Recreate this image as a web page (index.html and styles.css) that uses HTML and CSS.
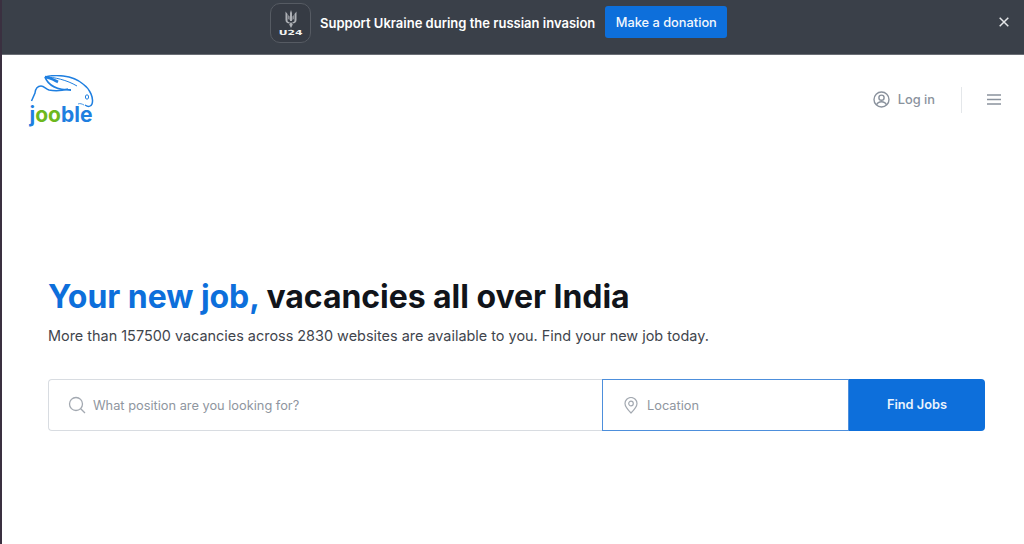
FILE: index.html
```html
<!DOCTYPE html>
<html lang="en">
<head>
<meta charset="utf-8">
<title>Jooble</title>
<link rel="stylesheet" href="styles.css">
</head>
<body>
<div class="banner">
  <div class="u24">
    <svg class="trident" width="12" height="18" viewBox="0 0 12 18" fill="#aeb1b6" stroke="none"><path d="M6 0l1 3v8H5V3zM.5 1.500L2.500 4v6.500c0 1 1 1.500 2 1.500v1.500C2 13.500.5 12 .5 10zM11.500 1.500L9.500 4v6.500c0 1-1 1.500-2 1.500v1.500c2.500 0 4-1.500 4-3.500zM3.300 5l1.200 1.500V10L3.300 9zM8.700 5L7.500 6.500V10l1.200-1zM6 12l1.800 2.500L6 18l-1.800-3.500z"/></svg>
    <span class="u24-text">U24</span>
  </div>
  <span class="banner-text">Support Ukraine during the russian invasion</span>
  <a class="donate">Make a donation</a>
  <svg class="close" width="10" height="10" viewBox="0 0 10 10" fill="none" stroke="#e4e6e8" stroke-width="1.500"><path d="M.7.700l8.600 8.600M9.300.700L.7 9.300"/></svg>
</div>
<header class="topbar">
  <div class="logo">
    <svg class="rabbit" width="66" height="34" viewBox="0 0 66 34" fill="none" stroke="#1f7fe0">
      <path d="M17 2C26 -.5 44 -.5 55 9c7 5 11 14 9 20-1 3-4 3-7 1" stroke-width="1.500"/>
      <path d="M17 2c9 0 22 3 32 9" stroke-width="1"/>
      <path d="M17 2c3 8 12 13 26 13" stroke-width="1.800"/>
      <path d="M17 2c5 .5 9 3 13 5" stroke-width="2.600"/>
      <path d="M40 14c-7 2-14 2-19 1-3-1-5-4-8-4-4 0-5.500 3-6 7l-3.500 8" stroke-width="1.500"/>
      <path d="M56 30c-2-1-4-2-6-1" stroke-width=".8"/>
      <ellipse cx="59" cy="22" rx="1.600" ry="2.200" stroke-width="1"/>
    </svg>
    <span class="wordmark"><span class="wm-blue">j</span><span class="wm-green">oo</span><span class="wm-blue">ble</span></span>
  </div>
  <div class="user-nav">
    <a class="login">
      <svg width="17" height="17" viewBox="0 0 17 17" fill="none" stroke="#8a929d" stroke-width="1.400"><circle cx="8.500" cy="8.500" r="7.500"/><circle cx="8.500" cy="6.700" r="2.600"/><path d="M3.500 14c1-2.500 3-3.200 5-3.200s4 .7 5 3.200"/></svg>
      <span>Log in</span>
    </a>
    <span class="divider"></span>
    <svg class="burger" width="14" height="11" viewBox="0 0 14 11" fill="none" stroke="#8a929d" stroke-width="1.500"><path d="M0 1h14M0 5.500h14M0 10h14"/></svg>
  </div>
</header>
<main class="hero">
  <h1 class="title"><span class="title-blue">Your new job,</span> vacancies all over India</h1>
  <p class="subtitle">More than 157500 vacancies across 2830 websites are available to you. Find your new job today.</p>
  <form class="search">
    <div class="field field-job">
      <svg width="18" height="18" viewBox="0 0 18 18" fill="none" stroke="#a3a9b1" stroke-width="1.300"><circle cx="8" cy="8" r="6.500"/><path d="M12.700 12.700L17 17"/></svg>
      <span class="placeholder">What position are you looking for?</span>
    </div>
    <div class="field field-loc">
      <svg width="14" height="17" viewBox="0 0 14 17" fill="none" stroke="#a3a9b1" stroke-width="1.200"><path d="M7 16C4 13 1 10 1 6.500a6 6 0 0 1 12 0C13 10 10 13 7 16z"/><circle cx="7" cy="6.500" r="2.300"/></svg>
      <span class="placeholder">Location</span>
    </div>
    <a class="find">Find Jobs</a>
  </form>
</main>
</body>
</html>
```
FILE: styles.css
```css
* { box-sizing: border-box; }
html, body { height: 100%; }
body {
  margin: 0;
  background: #fff;
  border-left: 2px solid #3a3040;
  font-family: Inter, "Liberation Sans", sans-serif;
  color: #11141a;
  overflow: hidden;
}
.banner {
  height: 55px;
  margin-left: -2px;
  padding: 3px 15px 0 270px;
  background: #3a4049;
  border-bottom: 1px solid #6a6e75;
  display: flex;
  align-items: flex-start;
}
.u24 {
  width: 41px;
  height: 40px;
  border: 1px solid #565b63;
  border-radius: 10px;
  display: flex;
  flex-direction: column;
  align-items: center;
  padding-top: 6px;
  background: #363b44;
}
.u24-text { font-family: "DejaVu Sans", sans-serif; font-size: 7px; font-weight: 700; line-height: 7px; color: #f0f0f0; margin-top: 2px; transform: scaleX(1.55); }
.banner-text { margin: 12px 0 0 9px; font-size: 13px; line-height: 16px; font-weight: 600; color: #fff; }
.donate {
  margin: 3px 0 0 10px;
  width: 122px;
  height: 32px;
  background: #0d6fdb;
  border-radius: 3px;
  color: #f2f7fd;
  font-size: 12.800px;
  font-weight: 500;
  display: flex;
  align-items: center;
  justify-content: center;
}
.close { margin: 14px 0 0 auto; }
.topbar {
  display: flex;
  justify-content: space-between;
  align-items: flex-start;
  padding: 20px 23px 0 26px;
}
.logo { width: 66px; height: 54px; display: flex; flex-direction: column; align-items: center; }
.rabbit { display: block; flex: none; margin-bottom: -6px; }
.wordmark { font-size: 21px; line-height: 24px; font-weight: 700; letter-spacing: 0; }
.wm-blue { color: #1f7fe0; }
.wm-green { color: #6db81e; }
.user-nav { display: flex; align-items: center; height: 27px; margin-top: 11px; }
.login { display: flex; align-items: center; gap: 8px; color: #8a929d; font-size: 12.800px; font-weight: 500; }
.divider { width: 1px; height: 26px; background: #e4e7ea; margin: 0 25px 0 26px; }
.burger { display: block; }
.hero { padding: 148px 37px 0 46px; }
.title { margin: 0; font-size: 32px; line-height: 40px; font-weight: 700; letter-spacing: -.05px; color: #11141a; }
.title-blue { color: #0d6fdb; }
.subtitle { margin: 9px 0 0; font-size: 14.430px; line-height: 20px; color: #3f454d; }
.search { margin-top: 33px; height: 52px; display: flex; }
.field { display: flex; align-items: center; border: 1px solid #d8dce1; background: #fff; }
.field-job { width: 554px; padding-left: 19px; gap: 7px; border-right: 0; border-radius: 4px 0 0 4px; }
.field-loc { width: 247px; padding-left: 21px; gap: 9px; border-color: #4d8fdc; }
.placeholder { font-size: 12.800px; color: #8f96a0; }
.find {
  width: 136px;
  background: #0d6fdb;
  border-radius: 0 4px 4px 0;
  color: #eaf3fd;
  font-size: 12.800px;
  font-weight: 600;
  display: flex;
  align-items: center;
  justify-content: center;
  padding-bottom: 2px;
}
```
